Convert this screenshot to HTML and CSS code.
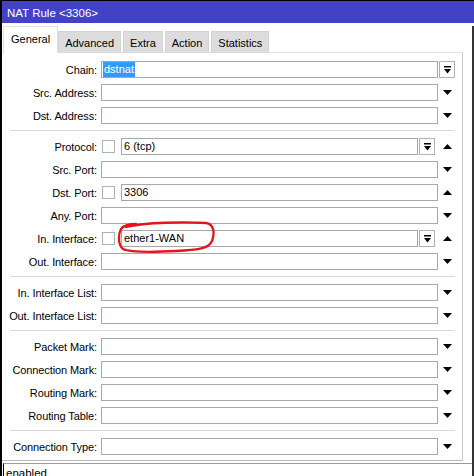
FILE: index.html
```html
<!DOCTYPE html>
<html lang="en">
<head>
    <meta charset="UTF-8">
    <title>NAT Rule &lt;3306&gt;</title>
    <link rel="stylesheet" href="styles.css">
</head>
<body>
    <div class="window">
        <div class="topStrip"></div>
        <div class="titleBar">NAT Rule &lt;3306&gt;</div>
        <div class="dialog">
            <div class="tabs">
                <div class="tab active">General</div>
                <div class="tab">Advanced</div>
                <div class="tab">Extra</div>
                <div class="tab">Action</div>
                <div class="tab">Statistics</div>
            </div>
            <div class="main">
                <div class="panel">
                    <div class="group">
                        <div class="row">
                            <div class="lbl">Chain:</div>
                            <div class="field"><div class="box"><span class="sel">dstnat</span></div></div>
                            <div class="side sideLeft">
                                <span class="btn"><svg width="7" height="8" viewBox="0 0 7 8"><rect x="0" y="0" width="7" height="1.5" fill="#000"/><polygon points="0,3 7,3 3.5,7.5" fill="#000"/></svg></span>
                            </div>
                        </div>
                        <div class="row">
                            <div class="lbl">Src. Address:</div>
                            <div class="field"><div class="box"></div></div>
                            <div class="side"><svg class="down" width="9" height="5"><polygon points="0,0 9,0 4.5,5" fill="#000"/></svg></div>
                        </div>
                        <div class="row">
                            <div class="lbl">Dst. Address:</div>
                            <div class="field"><div class="box"></div></div>
                            <div class="side"><svg class="down" width="9" height="5"><polygon points="0,0 9,0 4.5,5" fill="#000"/></svg></div>
                        </div>
                    </div>
                    <div class="sep"></div>
                    <div class="group">
                        <div class="row">
                            <div class="lbl">Protocol:</div>
                            <div class="field">
                                <span class="chk"></span>
                                <div class="box">6 (tcp)</div>
                                <span class="btn inField"><svg width="7" height="8" viewBox="0 0 7 8"><rect x="0" y="0" width="7" height="1.5" fill="#000"/><polygon points="0,3 7,3 3.5,7.5" fill="#000"/></svg></span>
                            </div>
                            <div class="side"><svg width="9" height="5"><polygon points="0,5 9,5 4.5,0" fill="#000"/></svg></div>
                        </div>
                        <div class="row">
                            <div class="lbl">Src. Port:</div>
                            <div class="field"><div class="box"></div></div>
                            <div class="side"><svg width="9" height="5"><polygon points="0,0 9,0 4.5,5" fill="#000"/></svg></div>
                        </div>
                        <div class="row">
                            <div class="lbl">Dst. Port:</div>
                            <div class="field">
                                <span class="chk"></span>
                                <div class="box">3306</div>
                            </div>
                            <div class="side"><svg width="9" height="5"><polygon points="0,5 9,5 4.5,0" fill="#000"/></svg></div>
                        </div>
                        <div class="row">
                            <div class="lbl">Any. Port:</div>
                            <div class="field"><div class="box"></div></div>
                            <div class="side"><svg width="9" height="5"><polygon points="0,0 9,0 4.5,5" fill="#000"/></svg></div>
                        </div>
                        <div class="row marked">
                            <div class="lbl">In. Interface:</div>
                            <div class="field">
                                <span class="chk"></span>
                                <div class="box">ether1-WAN</div>
                                <span class="btn inField"><svg width="7" height="8" viewBox="0 0 7 8"><rect x="0" y="0" width="7" height="1.5" fill="#000"/><polygon points="0,3 7,3 3.5,7.5" fill="#000"/></svg></span>
                            </div>
                            <div class="side"><svg width="9" height="5"><polygon points="0,5 9,5 4.5,0" fill="#000"/></svg></div>
                            <svg class="scribble" width="100" height="36" viewBox="0 0 100 36">
                                <path d="M 10 6 C 30 1, 70 1, 90 2 C 98 3, 99 12, 96 20 C 93 28, 80 29, 60 30 C 40 31, 15 32, 7 28 C 2 24, 2 14, 5 8 C 7 5, 12 3, 20 3" fill="none" stroke="#e3141c" stroke-width="2.3" stroke-linecap="round"/>
                            </svg>
                        </div>
                        <div class="row">
                            <div class="lbl">Out. Interface:</div>
                            <div class="field"><div class="box"></div></div>
                            <div class="side"><svg width="9" height="5"><polygon points="0,0 9,0 4.5,5" fill="#000"/></svg></div>
                        </div>
                    </div>
                    <div class="sep"></div>
                    <div class="group">
                        <div class="row">
                            <div class="lbl">In. Interface List:</div>
                            <div class="field"><div class="box"></div></div>
                            <div class="side"><svg width="9" height="5"><polygon points="0,0 9,0 4.5,5" fill="#000"/></svg></div>
                        </div>
                        <div class="row">
                            <div class="lbl">Out. Interface List:</div>
                            <div class="field"><div class="box"></div></div>
                            <div class="side"><svg width="9" height="5"><polygon points="0,0 9,0 4.5,5" fill="#000"/></svg></div>
                        </div>
                    </div>
                    <div class="sep"></div>
                    <div class="group">
                        <div class="row">
                            <div class="lbl">Packet Mark:</div>
                            <div class="field"><div class="box"></div></div>
                            <div class="side"><svg width="9" height="5"><polygon points="0,0 9,0 4.5,5" fill="#000"/></svg></div>
                        </div>
                        <div class="row">
                            <div class="lbl">Connection Mark:</div>
                            <div class="field"><div class="box"></div></div>
                            <div class="side"><svg width="9" height="5"><polygon points="0,0 9,0 4.5,5" fill="#000"/></svg></div>
                        </div>
                        <div class="row">
                            <div class="lbl">Routing Mark:</div>
                            <div class="field"><div class="box"></div></div>
                            <div class="side"><svg width="9" height="5"><polygon points="0,0 9,0 4.5,5" fill="#000"/></svg></div>
                        </div>
                        <div class="row">
                            <div class="lbl">Routing Table:</div>
                            <div class="field"><div class="box"></div></div>
                            <div class="side"><svg width="9" height="5"><polygon points="0,0 9,0 4.5,5" fill="#000"/></svg></div>
                        </div>
                    </div>
                    <div class="sep"></div>
                    <div class="group">
                        <div class="row">
                            <div class="lbl">Connection Type:</div>
                            <div class="field"><div class="box"></div></div>
                            <div class="side"><svg width="9" height="5"><polygon points="0,0 9,0 4.5,5" fill="#000"/></svg></div>
                        </div>
                    </div>
                </div>
                <div class="edge"></div>
            </div>
            <div class="status">enabled</div>
        </div>
    </div>
</body>
</html>
```

FILE: styles.css
```css
html, body {
    margin: 0;
    padding: 0;
    background-color: white;
}

body {
    font-family: 'Liberation Sans', Arial, sans-serif;
    font-size: 11px;
    color: #000;
    overflow: hidden;
}

.window {
    width: 474px;
    height: 476px;
    box-sizing: border-box;
    border-left: 2px solid #000;
    display: flex;
    flex-direction: column;
    overflow: hidden;
}

.topStrip {
    height: 2px;
    border-bottom: 1px solid #000;
    background-color: #fff;
    margin-left: -2px;
}

.titleBar {
    height: 22px;
    background-color: #4242c6;
    color: #fff;
    font-size: 11.5px;
    line-height: 24px;
    margin-left: -2px;
    padding-left: 7px;
}

.dialog {
    flex: 1;
    display: flex;
    flex-direction: column;
    border-right: 2px solid #333;
    margin-top: 3px;
}

.tabs {
    display: flex;
    align-items: flex-end;
    height: 27px;
    padding-left: 1px;
    box-sizing: border-box;
    border-bottom: 1px solid #e2e2e2;
    margin-right: 9px;
}

.tab {
    height: 22px;
    line-height: 22px;
    padding: 0 6px;
    background-color: #dcdcdc;
    border: 1px solid #d2d2d2;
    border-bottom: none;
    box-sizing: border-box;
    margin-right: 2px;
    margin-bottom: -1px;
}

.tab.active {
    height: 27px;
    line-height: 25px;
    background-color: #fff;
    border-color: #e0e0e0;
    padding: 0 7px;
    margin-right: 0;
}

.main {
    display: flex;
}

.panel {
    width: 461px;
    box-sizing: border-box;
    border-right: 1px solid #cccccc;
    border-bottom: 1px solid #b8b8b8;
    padding: 5px 5px 2px 0;
}

.edge {
    flex: 1;
}

.row {
    display: flex;
    align-items: center;
    height: 23px;
    position: relative;
}

.lbl {
    width: 95px;
    margin-right: 4px;
    text-align: right;
    white-space: nowrap;
    letter-spacing: -0.1px;
}

.field {
    flex: 1;
    display: flex;
    align-items: center;
}

.box {
    flex: 1;
    height: 17px;
    line-height: 15px;
    box-sizing: border-box;
    border: 1px solid #a8a8a8;
    padding-left: 2px;
    white-space: nowrap;
}

.sel {
    display: inline-block;
    margin-left: -1px;
    padding: 0 1px;
    background-color: #3399ff;
    color: #fff;
    line-height: 15px;
}

.chk {
    width: 13px;
    height: 13px;
    box-sizing: border-box;
    border: 1px solid #b0b0b0;
    margin: 0 6px 0 1px;
}

.btn {
    width: 16px;
    height: 17px;
    box-sizing: border-box;
    border: 1px solid #b0b0b0;
    display: flex;
    align-items: center;
    justify-content: center;
}

.btn.inField {
    margin: 0 3px 0 1px;
}

.side {
    width: 19px;
    display: flex;
    justify-content: center;
    align-items: center;
}

.sideLeft {
    justify-content: flex-start;
}

.sideLeft .btn {
    margin-left: 1px;
}

.sep {
    height: 1px;
    background-color: #dadada;
    margin: 3px 2px 4px 8px;
}

.scribble {
    position: absolute;
    left: 114px;
    top: -6px;
}

.status {
    margin-top: 2px;
    margin-left: 1px;
    border-top: 1px solid #9a9a9a;
    border-left: 1px solid #000;
    padding: 2px 0 0 2px;
    font-size: 11.5px;
    line-height: 14px;
    height: 14px;
}
```
